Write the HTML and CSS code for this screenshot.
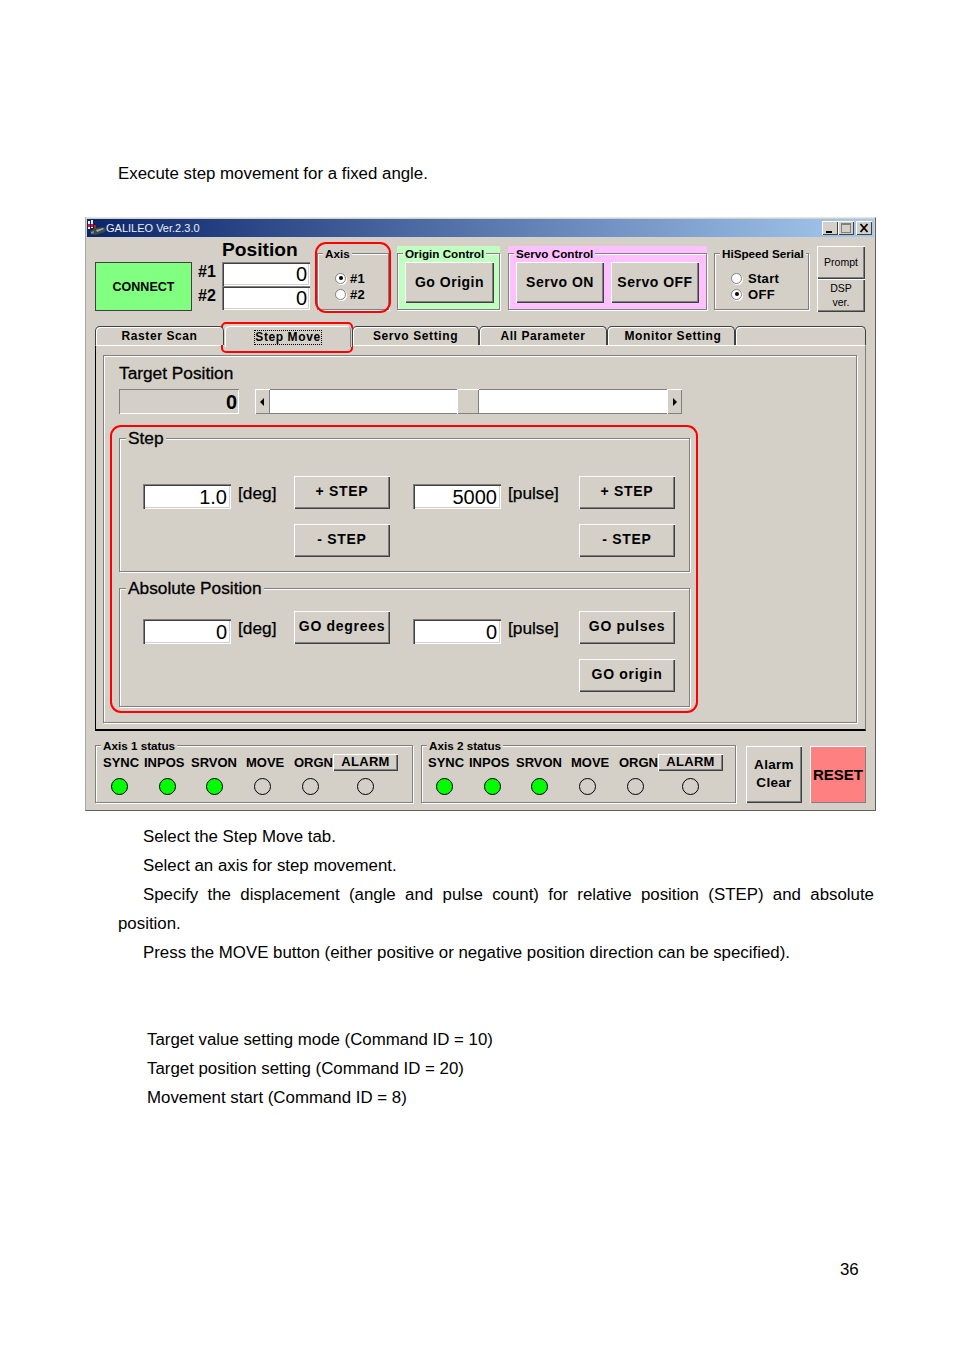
FILE: index.html
```html
<!DOCTYPE html>
<html lang="en">
<head>
<meta charset="utf-8">
<title>GALILEO Step Move</title>
<link rel="stylesheet" href="styles.css">
</head>
<body>
<main class="page">
  <p class="line lead">Execute step movement for a fixed angle.</p>

  <section class="window">
    <header class="titlebar">
      <svg class="app-icon" width="18" height="16" viewBox="0 0 18 16">
        <rect x="0" y="1" width="2" height="8" fill="#f0f0f0"/>
        <rect x="3" y="0" width="2" height="8" fill="#f0f0f0"/>
        <rect x="0" y="4" width="2" height="3" fill="#e01818"/>
        <rect x="3" y="4" width="2" height="3" fill="#e01818"/>
        <rect x="6" y="5" width="2" height="4" fill="#c01818"/>
        <path d="M2 11 L8 8 L16 7 L18 9 L17 12 L7 15 L3 14 Z" fill="#3c4a44"/>
        <path d="M8 10 L15 8 L16 9 L9 12 Z" fill="#a0aca4"/>
        <path d="M3 12 L6 11 L6 13 L3 14 Z" fill="#7f8f88"/>
      </svg>
      <span class="title-text">GALILEO Ver.2.3.0</span>
      <div class="win-btns">
        <span class="win-btn"><svg width="14" height="14" viewBox="0 0 14 14"><rect x="3" y="10" width="6" height="2" fill="#000"/></svg></span>
        <span class="win-btn"><svg width="14" height="14" viewBox="0 0 14 14"><rect x="2.5" y="2.5" width="9" height="9" fill="none" stroke="#808080"/><rect x="2" y="2" width="10" height="2" fill="#808080"/></svg></span>
        <span class="win-btn close"><svg width="14" height="14" viewBox="0 0 14 14"><path d="M3.5 3 L10.5 11 M10.5 3 L3.5 11" stroke="#000" stroke-width="1.8" fill="none"/></svg></span>
      </div>
    </header>

    <div class="top">
      <button class="btn connect">CONNECT</button>
      <div class="pos">
        <div class="pos-title">Position</div>
        <div class="pos-row"><span class="pos-label">#1</span><span class="input pos-input">0</span></div>
        <div class="pos-row"><span class="pos-label">#2</span><span class="input pos-input">0</span></div>
      </div>
      <div class="group axis">
        <span class="legend small-legend">Axis</span>
        <div class="radio-row"><span class="radio on"></span>#1</div>
        <div class="radio-row"><span class="radio"></span>#2</div>
      </div>
      <div class="tint green">
        <div class="group tint-group">
          <span class="legend small-legend">Origin Control</span>
          <button class="btn ctl origin-btn">Go Origin</button>
        </div>
      </div>
      <div class="tint pink">
        <div class="group tint-group">
          <span class="legend small-legend">Servo Control</span>
          <button class="btn ctl">Servo ON</button>
          <button class="btn ctl">Servo OFF</button>
        </div>
      </div>
      <div class="group hispeed">
        <span class="legend small-legend">HiSpeed Serial</span>
        <div class="radio-row"><span class="radio"></span>Start</div>
        <div class="radio-row"><span class="radio on"></span>OFF</div>
      </div>
      <div class="side-btns">
        <button class="btn side">Prompt</button>
        <button class="btn side">DSP<br>ver.</button>
      </div>
    </div>

    <nav class="tabs">
      <span class="tab raster">Raster Scan</span>
      <span class="tab active"><span class="focus">Step Move</span></span>
      <span class="tab servo">Servo Setting</span>
      <span class="tab all">All Parameter</span>
      <span class="tab monitor">Monitor Setting</span>
      <span class="tab rest"></span>
    </nav>

    <div class="panel">
      <div class="inner">
        <div class="target-title">Target Position</div>
        <div class="target-row">
          <span class="readout">0</span>
          <div class="scroll">
            <span class="scroll-btn"><svg width="5" height="8" viewBox="0 0 5 8"><path d="M4 0 V8 L0 4 Z" fill="#000"/></svg></span>
            <span class="track wide"></span>
            <span class="thumb"></span>
            <span class="track narrow"></span>
            <span class="scroll-btn"><svg width="5" height="8" viewBox="0 0 5 8"><path d="M1 0 V8 L5 4 Z" fill="#000"/></svg></span>
          </div>
        </div>

        <div class="group big step-group">
          <span class="legend big-legend">Step</span>
          <div class="form-grid">
            <span class="input field">1.0</span>
            <span class="unit">[deg]</span>
            <button class="btn act">+ STEP</button>
            <span class="input field c5">5000</span>
            <span class="unit">[pulse]</span>
            <button class="btn act">+ STEP</button>
            <button class="btn act c3">- STEP</button>
            <button class="btn act c7">- STEP</button>
          </div>
        </div>

        <div class="group big abs-group">
          <span class="legend big-legend">Absolute Position</span>
          <div class="form-grid">
            <span class="input field">0</span>
            <span class="unit">[deg]</span>
            <button class="btn act">GO degrees</button>
            <span class="input field c5">0</span>
            <span class="unit">[pulse]</span>
            <button class="btn act">GO pulses</button>
            <button class="btn act c7">GO origin</button>
          </div>
        </div>
      </div>
    </div>

    <div class="bottom">
      <div class="group status">
        <span class="legend small-legend">Axis 1 status</span>
        <div class="st-labels">
          <span>SYNC</span><span>INPOS</span><span>SRVON</span><span>MOVE</span><span>ORGN</span><button class="btn alarm">ALARM</button>
        </div>
        <div class="leds">
          <i class="led on"></i><i class="led on"></i><i class="led on"></i><i class="led"></i><i class="led"></i><i class="led"></i>
        </div>
      </div>
      <div class="group status second">
        <span class="legend small-legend">Axis 2 status</span>
        <div class="st-labels">
          <span>SYNC</span><span>INPOS</span><span>SRVON</span><span>MOVE</span><span>ORGN</span><button class="btn alarm">ALARM</button>
        </div>
        <div class="leds">
          <i class="led on"></i><i class="led on"></i><i class="led on"></i><i class="led"></i><i class="led"></i><i class="led"></i>
        </div>
      </div>
      <button class="btn clear">Alarm<br>Clear</button>
      <button class="btn reset">RESET</button>
    </div>

    <span class="red red-axis"></span>
    <span class="red red-tab"></span>
    <span class="red red-main"></span>
  </section>

  <div class="text first">
    <p class="line indent">Select the Step Move tab.</p>
    <p class="line indent">Select an axis for step movement.</p>
    <p class="line indent justify">Specify the displacement (angle and pulse count) for relative position (STEP) and absolute position.</p>
    <p class="line indent">Press the MOVE button (either positive or negative position direction can be specified).</p>
  </div>
  <div class="text cmds">
    <p class="line">Target value setting mode (Command ID = 10)</p>
    <p class="line">Target position setting (Command ID = 20)</p>
    <p class="line">Movement start (Command ID = 8)</p>
  </div>
  <div class="page-no">36</div>
</main>
</body>
</html>
```
FILE: styles.css
```css
* { box-sizing: border-box; }
html, body { margin: 0; padding: 0; background: #fff; }
body { width: 954px; height: 1350px; overflow: hidden; font-family: "Liberation Sans", Arial, sans-serif; color: #000; }
p { margin: 0; }
button { font-family: inherit; padding: 0; margin: 0; border: 0; color: #000; }

.page { padding: 159px 0 0 85px; }
.line { font-size: 16.85px; line-height: 29px; }
.lead { margin-left: 33px; margin-bottom: 29px; }
.text { margin-left: 33px; width: 756px; }
.first { margin-top: 11px; }
.indent { text-indent: 25px; }
.justify { text-align: justify; }
.cmds { margin-top: 58px; margin-left: 62px; }
.page-no { margin: 143px 0 0 755px; font-size: 16.85px; line-height: 29px; }

.window { position: relative; width: 791px; height: 594px; background: #d4d0c8; padding: 1px; border-top: 1px solid #e8e6e0; border-left: 1px solid #a8a8a4; border-right: 1px solid #606060; border-bottom: 1px solid #606060; }
.titlebar { display: flex; align-items: center; height: 18px; padding-left: 1px; background: linear-gradient(90deg, #0a246a, #a6caf0); }
.app-icon { flex: none; }
.title-text { color: #f0f0f0; font-size: 11px; }
.win-btns { margin-left: auto; display: flex; margin-right: 2px; }
.win-btn { display: block; width: 16px; height: 14px; background: #d4d0c8; box-shadow: inset 1px 1px #fff, inset -1px -1px #404040; }
.win-btn svg { display: block; margin-left: 1px; }
.close { margin-left: 2px; }

.btn { display: block; background: #d4d0c8; box-shadow: inset 1px 1px #fff, inset -1px -1px #404040, inset -2px -2px #808080; font-weight: bold; letter-spacing: .6px; text-align: center; }

.group { position: relative; border: 1px solid #808080; box-shadow: inset 1px 1px #fff, 1px 1px #fff; }
.legend { position: absolute; background: #d4d0c8; padding: 0 2px; font-weight: bold; white-space: nowrap; }
.small-legend { top: -7px; left: 5px; font-size: 11.7px; line-height: 13px; }
.big-legend { top: -10px; left: 6px; font-size: 17.3px; line-height: 19px; font-weight: normal; -webkit-text-stroke: .3px #000; }

.input { display: block; background: #fff; text-align: right; box-shadow: inset 1px 1px #808080, inset 2px 2px #404040, inset -1px -1px #fff, inset -2px -2px #d4d0c8; }

.top { display: flex; align-items: flex-start; height: 89px; padding-left: 8px; }
.connect { width: 97px; height: 49px; margin-top: 25px; background: #80ff80; font-size: 12.5px; letter-spacing: 0; box-shadow: inset 0 0 0 1px #404040; }
.pos { margin-left: 6px; width: 112px; margin-top: 2px; }
.pos-title { padding-left: 24px; font-size: 19.2px; line-height: 21px; font-weight: bold; height: 23px; }
.pos-row { display: flex; align-items: center; justify-content: space-between; height: 24px; }
.pos-label { font-size: 16px; font-weight: bold; line-height: 16px; margin-top: -5px; }
.pos-input { width: 88px; height: 24px; font-size: 20px; line-height: 24px; padding-right: 3px; }

.axis { width: 72px; height: 57px; margin: 16px 0 0 7px; padding: 16px 0 0 17px; }
.radio-row { display: flex; align-items: center; height: 16px; font-size: 13px; font-weight: bold; letter-spacing: .3px; }
.radio { display: block; position: relative; width: 11px; height: 11px; margin-right: 4px; border-radius: 50%; background: #fff; border: 1px solid #808080; box-shadow: 1px 1px 0 #fff; }
.radio.on::after { content: ""; position: absolute; left: 2.5px; top: 2.5px; width: 4px; height: 4px; border-radius: 50%; background: #000; }

.tint { height: 64px; margin-top: 9px; padding-top: 7px; }
.green { width: 103px; margin-left: 8px; background: #c0ffc0; }
.pink { width: 199px; margin-left: 8px; background: #ffc0ff; }
.tint-group { display: flex; height: 57px; padding: 8px 0 0 7px; gap: 7px; }
.tint-group .legend { background: #c0ffc0; }
.pink .tint-group .legend { background: #ffc0ff; }
.ctl { width: 88px; height: 41px; padding-bottom: 2px; font-size: 14px; letter-spacing: .5px; }
.origin-btn { width: 89px; }

.hispeed { width: 95px; height: 57px; margin: 16px 0 0 7px; padding: 16px 0 0 16px; }
.hispeed .radio { margin-right: 6px; }
.side-btns { margin: 9px 0 0 8px; width: 48px; }
.side { width: 48px; height: 33px; padding-bottom: 2px; font-size: 10.5px; font-weight: normal; letter-spacing: 0; line-height: 14px; }

.tabs { display: flex; align-items: flex-end; height: 22px; padding-left: 8px; margin-top: -3px; position: relative; z-index: 1; }
.tab { display: flex; flex: none; justify-content: center; align-items: center; height: 19px; font-size: 12px; font-weight: bold; letter-spacing: .6px; border: 1px solid #404040; border-bottom: 0; border-radius: 5px 5px 0 0; box-shadow: inset 1px 1px #fff; background: #d4d0c8; }
.raster { width: 129px; }
.active { width: 128px; height: 22px; margin-bottom: -2px; padding-top: 2px; box-shadow: inset 1px 1px #fff, inset -1px 0 #808080; border-color: #d4d0c8; }
.servo { width: 127px; }
.all { width: 128px; }
.monitor { width: 128px; padding-left: 4px; }
.rest { width: 131px; }
.focus { outline: 1px dotted #000; line-height: 13px; }

.panel { width: 771px; height: 386px; margin-left: 8px; padding: 9px 8px 0 7px; border-left: 1px solid #000; border-bottom: 2px solid #000; border-right: 1px solid #808080; border-top: 1px solid #fff; }
.inner { width: 754px; height: 368px; border: 1px solid #808080; box-shadow: inset 1px 1px #fff, 1px 1px #fff; padding: 7px 0 0 15px; }
.target-title { font-size: 17.3px; line-height: 20px; -webkit-text-stroke: .3px #000; height: 26px; }
.target-row { display: flex; }
.readout { width: 120px; height: 25px; font-size: 20px; font-weight: bold; line-height: 27px; text-align: right; padding-right: 2px; box-shadow: inset 1px 1px #808080, inset -1px -1px #fff; }
.scroll { display: flex; width: 427px; height: 25px; margin-left: 16px; }
.scroll-btn { display: flex; width: 15px; align-items: center; justify-content: center; background: #d4d0c8; box-shadow: inset 1px 1px #fff, inset -1px -1px #808080; }
.track { display: block; background: #fff; border-top: 1px solid #808080; border-bottom: 1px solid #808080; }
.wide { width: 187px; }
.narrow { width: 188px; }
.thumb { display: block; width: 22px; background: #d4d0c8; box-shadow: inset 1px 1px #fff, inset -1px -1px #808080; }

.big { width: 571px; }
.step-group { height: 134px; margin-top: 24px; }
.abs-group { height: 119px; margin-top: 16px; }
.form-grid { display: grid; grid-template-columns: 88px 63px 96px 23px 88px 78px 96px; row-gap: 15px; grid-auto-rows: 33px; padding: 37px 0 0 23px; }
.abs-group .form-grid { padding-top: 22px; }
.field { height: 25px; align-self: end; font-size: 20px; line-height: 27px; padding-right: 4px; }
.unit { align-self: end; padding: 0 0 6px 7px; font-size: 17.3px; line-height: 20px; -webkit-text-stroke: .25px #000; white-space: nowrap; }
.act { width: 96px; height: 33px; font-size: 14px; letter-spacing: .7px; padding-bottom: 3px; }
.c3 { grid-column: 3; grid-row: 2; }
.c5 { grid-column: 5; }
.c7 { grid-column: 7; grid-row: 2; }

.bottom { display: flex; padding: 14px 0 0 8px; align-items: flex-start; }
.status { height: 58px; width: 318px; padding: 8px 0 0 7px; }
.second { width: 315px; margin-left: 8px; padding-left: 6px; }
.st-labels { display: grid; grid-template-columns: 41px 47px 55px 48px 39px 65px; font-size: 13px; line-height: 17px; font-weight: bold; height: 17px; white-space: nowrap; }
.alarm { width: 65px; height: 17px; font-size: 13px; letter-spacing: .3px; line-height: 15px; padding-bottom: 2px; }
.leds { display: grid; grid-template-columns: 48px 47px 48px 48px 55px 17px; margin: 7px 0 0 8px; }
.led { display: block; width: 17px; height: 17px; border-radius: 50%; border: 1px solid #000; background: #d4d0c8; }
.led.on { background: #00ff00; }
.clear { width: 56px; height: 57px; margin: 1px 0 0 10px; padding-bottom: 2px; font-size: 13.5px; line-height: 18px; letter-spacing: .3px; }
.reset { width: 56px; height: 57px; margin: 1px 0 0 8px; background: #ff8080; font-size: 15px; letter-spacing: 0; box-shadow: inset 1px 1px #fff, inset -1px -1px #808080; }

.red { position: absolute; display: block; border: 2px solid #f00; pointer-events: none; }
.red-axis { left: 229px; top: 24px; width: 76px; height: 71px; border-radius: 11px; }
.red-tab { left: 135px; top: 104px; width: 132px; height: 31px; border-radius: 5px; }
.red-main { left: 24px; top: 207px; width: 588px; height: 288px; border-radius: 11px; }
```
